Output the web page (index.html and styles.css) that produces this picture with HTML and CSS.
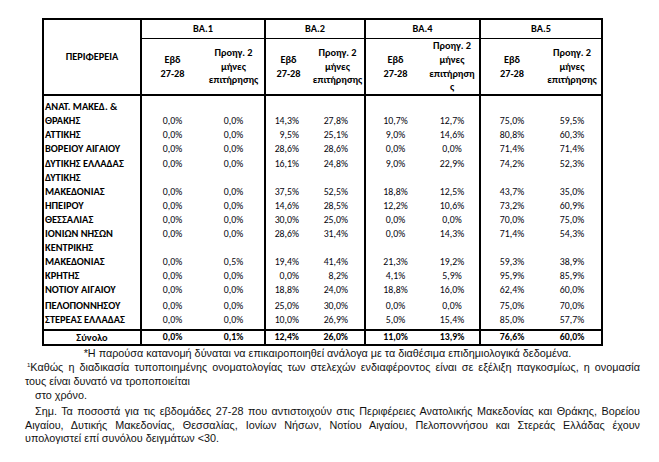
FILE: index.html
```html
<!DOCTYPE html>
<html lang="el">
<head>
<meta charset="utf-8">
<link rel="stylesheet" href="styles.css">
</head>
<body>
<div class="page">
  <table class="tbl">
    <colgroup>
      <col style="width:98px"><col style="width:62px"><col style="width:62px"><col style="width:46px"><col style="width:54px"><col style="width:60px"><col style="width:55px"><col style="width:63px"><col style="width:59px">
    </colgroup>
    <thead>
      <tr class="h1">
        <th rowspan="2" class="reg-h">ΠΕΡΙΦΕΡΕΙΑ</th>
        <th colspan="2" class="g">ΒΑ.1</th>
        <th colspan="2" class="g">ΒΑ.2</th>
        <th colspan="2" class="g">ΒΑ.4</th>
        <th colspan="2" class="g">ΒΑ.5</th>
      </tr>
      <tr class="h2">
        <th class="g">Εβδ<br>27-28</th><th>Προηγ. 2<br>μήνες<br>επιτήρησης</th>
        <th class="g">Εβδ<br>27-28</th><th>Προηγ. 2<br>μήνες<br>επιτήρησης</th>
        <th class="g">Εβδ<br>27-28</th><th>Προηγ. 2<br>μήνες<br>επιτήρηση<br>ς</th>
        <th class="g">Εβδ<br>27-28</th><th>Προηγ. 2<br>μήνες<br>επιτήρησης</th>
      </tr>
    </thead>
    <tbody>
      <tr class="first"><td class="reg">ΑΝΑΤ. ΜΑΚΕΔ. &amp;<br>ΘΡΑΚΗΣ</td><td class="g">0,0%</td><td>0,0%</td><td class="g r1">14,3%</td><td class="r2">27,8%</td><td class="g">10,7%</td><td>12,7%</td><td class="g">75,0%</td><td>59,5%</td></tr>
      <tr><td class="reg">ΑΤΤΙΚΗΣ</td><td class="g">0,0%</td><td>0,0%</td><td class="g r1">9,5%</td><td class="r2">25,1%</td><td class="g">9,0%</td><td>14,6%</td><td class="g">80,8%</td><td>60,3%</td></tr>
      <tr><td class="reg">ΒΟΡΕΙΟΥ ΑΙΓΑΙΟΥ</td><td class="g">0,0%</td><td>0,0%</td><td class="g r1">28,6%</td><td class="r2">28,6%</td><td class="g">0,0%</td><td>0,0%</td><td class="g">71,4%</td><td>71,4%</td></tr>
      <tr><td class="reg">ΔΥΤΙΚΗΣ ΕΛΛΑΔΑΣ</td><td class="g">0,0%</td><td>0,0%</td><td class="g r1">16,1%</td><td class="r2">24,8%</td><td class="g">9,0%</td><td>22,9%</td><td class="g">74,2%</td><td>52,3%</td></tr>
      <tr><td class="reg">ΔΥΤΙΚΗΣ<br>ΜΑΚΕΔΟΝΙΑΣ</td><td class="g">0,0%</td><td>0,0%</td><td class="g r1">37,5%</td><td class="r2">52,5%</td><td class="g">18,8%</td><td>12,5%</td><td class="g">43,7%</td><td>35,0%</td></tr>
      <tr><td class="reg">ΗΠΕΙΡΟΥ</td><td class="g">0,0%</td><td>0,0%</td><td class="g r1">14,6%</td><td class="r2">28,5%</td><td class="g">12,2%</td><td>10,6%</td><td class="g">73,2%</td><td>60,9%</td></tr>
      <tr><td class="reg">ΘΕΣΣΑΛΙΑΣ</td><td class="g">0,0%</td><td>0,0%</td><td class="g r1">30,0%</td><td class="r2">25,0%</td><td class="g">0,0%</td><td>0,0%</td><td class="g">70,0%</td><td>75,0%</td></tr>
      <tr><td class="reg">ΙΟΝΙΩΝ ΝΗΣΩΝ</td><td class="g">0,0%</td><td>0,0%</td><td class="g r1">28,6%</td><td class="r2">31,4%</td><td class="g">0,0%</td><td>14,3%</td><td class="g">71,4%</td><td>54,3%</td></tr>
      <tr><td class="reg">ΚΕΝΤΡΙΚΗΣ<br>ΜΑΚΕΔΟΝΙΑΣ</td><td class="g">0,0%</td><td>0,5%</td><td class="g r1">19,4%</td><td class="r2">41,4%</td><td class="g">21,3%</td><td>19,2%</td><td class="g">59,3%</td><td>38,9%</td></tr>
      <tr><td class="reg">ΚΡΗΤΗΣ</td><td class="g">0,0%</td><td>0,0%</td><td class="g r1">0,0%</td><td class="r2">8,2%</td><td class="g">4,1%</td><td>5,9%</td><td class="g">95,9%</td><td>85,9%</td></tr>
      <tr><td class="reg">ΝΟΤΙΟΥ ΑΙΓΑΙΟΥ</td><td class="g">0,0%</td><td>0,0%</td><td class="g r1">18,8%</td><td class="r2">24,0%</td><td class="g">18,8%</td><td>16,0%</td><td class="g">62,4%</td><td>60,0%</td></tr>
      <tr class="tall"><td class="reg">ΠΕΛΟΠΟΝΝΗΣΟΥ</td><td class="g">0,0%</td><td>0,0%</td><td class="g r1">25,0%</td><td class="r2">30,0%</td><td class="g">0,0%</td><td>0,0%</td><td class="g">75,0%</td><td>70,0%</td></tr>
      <tr class="last"><td class="reg">ΣΤΕΡΕΑΣ ΕΛΛΑΔΑΣ</td><td class="g">0,0%</td><td>0,0%</td><td class="g r1">10,0%</td><td class="r2">26,9%</td><td class="g">5,0%</td><td>15,4%</td><td class="g">85,0%</td><td>57,7%</td></tr>
    </tbody>
    <tfoot>
      <tr class="total"><td class="tot-l">Σύνολο</td><td class="g">0,0%</td><td>0,1%</td><td class="g r1">12,4%</td><td class="r2">26,0%</td><td class="g">11,0%</td><td>13,9%</td><td class="g">76,6%</td><td>60,0%</td></tr>
    </tfoot>
  </table>

  <div class="notes">
    <p class="n1">*Η παρούσα κατανομή δύναται να επικαιροποιηθεί ανάλογα με τα διαθέσιμα επιδημιολογικά δεδομένα.</p>
    <p class="n2 just"><sup>1</sup>Καθώς η διαδικασία τυποποιημένης ονοματολογίας των στελεχών ενδιαφέροντος είναι σε εξέλιξη παγκοσμίως, η ονομασία</p>
    <p class="n3">τους είναι δυνατό να τροποποιείται</p>
    <p class="n4">στο χρόνο.</p>
    <p class="n5 just">Σημ. Τα ποσοστά για τις εβδομάδες 27-28 που αντιστοιχούν στις Περιφέρειες Ανατολικής Μακεδονίας και Θράκης, Βορείου</p>
    <p class="n6 just">Αιγαίου, Δυτικής Μακεδονίας, Θεσσαλίας, Ιονίων Νήσων, Νοτίου Αιγαίου, Πελοποννήσου και Στερεάς Ελλάδας έχουν</p>
    <p class="n7">υπολογιστεί επί συνόλου δειγμάτων &lt;30.</p>
  </div>
</div>
</body>
</html>
```

FILE: styles.css
```css
html, body {
  margin: 0;
  padding: 0;
  background: #fff;
}

.page {
  padding: 18px 0 0 0;
}

.tbl {
  margin-left: 42px;
  width: 560px;
  table-layout: fixed;
  border-collapse: collapse;
  border: 2px solid #000;
  font-family: Carlito, Lato, "Liberation Sans", sans-serif;
  font-size: 9.8px;
  color: #05050f;
}

.tbl th {
  font-weight: 700;
  font-size: 10.3px;
  line-height: 13.8px;
  padding: 0;
  text-align: center;
  vertical-align: middle;
  color: #000;
  white-space: nowrap;
}

.h1 th.g {
  height: 18px;
  border-bottom: 1px solid #000;
}

.h2 th {
  height: 54px;
  border-bottom: 2px solid #000;
}

.reg-h {
  border-right: 2px solid #000;
  border-bottom: 2px solid #000;
}

.tbl .g {
  border-left: 2px solid #000;
}

.tbl td {
  padding: 0;
  line-height: 14.1px;
  text-align: center;
  vertical-align: bottom;
  white-space: nowrap;
}

.tbl td.reg {
  text-align: left;
  font-weight: 700;
  font-size: 10.4px;
  color: #000;
  padding-left: 1px;
  white-space: normal;
}

.tbl td.r1 {
  text-align: right;
  padding-right: 12px;
}

.tbl td.r2 {
  text-align: right;
  padding-right: 16px;
}

.first td {
  padding-top: 4px;
}

.tall td {
  padding-top: 1.5px;
}

.last td {
  padding-bottom: 2px;
}

.total td {
  border-top: 2px solid #000;
  font-weight: 700;
  color: #000;
  line-height: 13px;
}

.tbl td.tot-l {
  text-align: center;
  font-size: 10.3px;
}

.notes {
  margin: 1px 0 0 25px;
  width: 615px;
  font-family: "Liberation Sans Narrow", "Arial Narrow", "Liberation Sans", sans-serif;
  font-size: 10.8px;
  line-height: 13.5px;
  color: #111;
}

.notes p {
  margin: 0;
  white-space: nowrap;
}

.notes sup {
  font-size: 6px;
  line-height: 0;
  vertical-align: 4px;
}

.n1 {
  text-align: center;
  padding-right: 10px;
}

.n2 {
  padding-left: 2px;
}

.n3 {
  line-height: 14px;
}

.n4 {
  padding-left: 10px;
  line-height: 14px;
}

.n5 {
  padding-left: 10px;
  margin-top: 3px !important;
}

.just {
  white-space: normal !important;
  text-align: justify;
  text-align-last: justify;
}
```
